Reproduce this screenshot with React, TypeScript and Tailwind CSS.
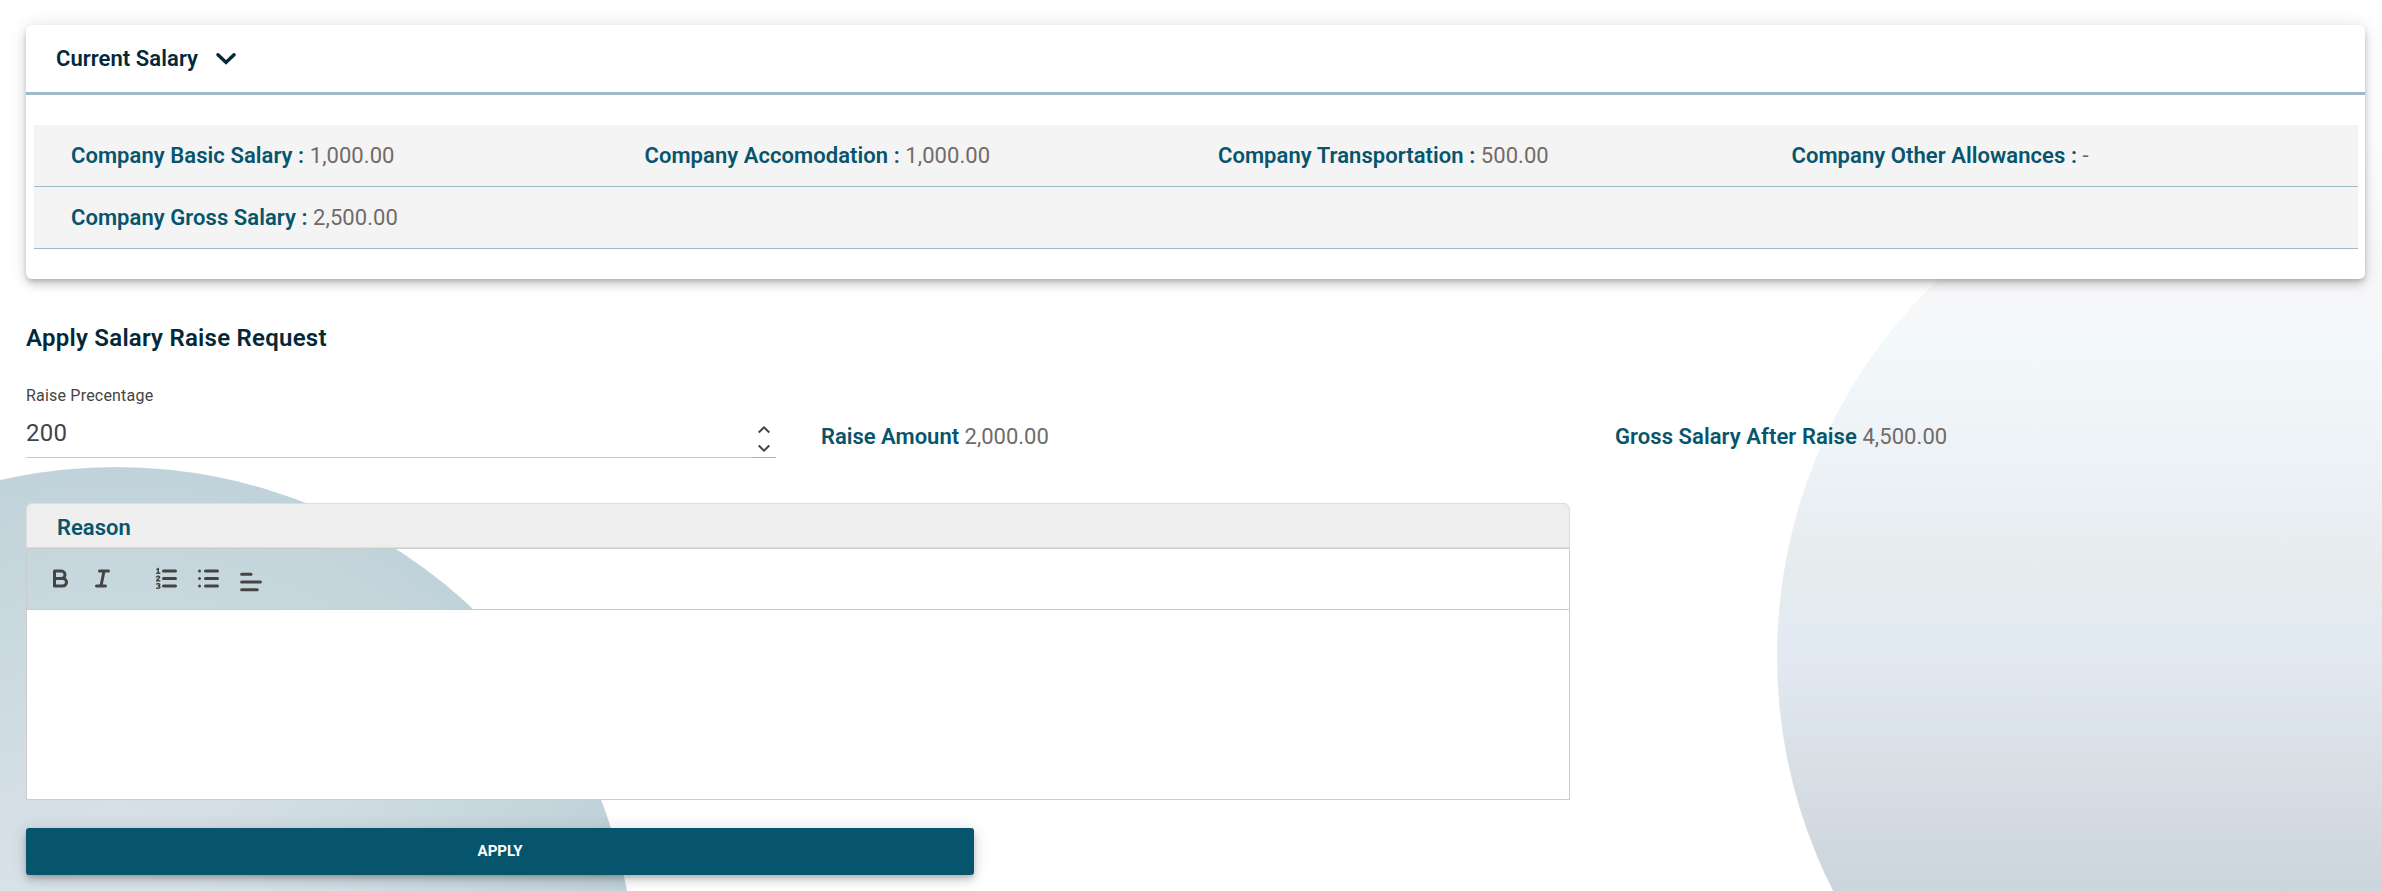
import React from "react";

const salaryItems = [
  { label: "Company Basic Salary", value: "1,000.00" },
  { label: "Company Accomodation", value: "1,000.00" },
  { label: "Company Transportation", value: "500.00" },
  { label: "Company Other Allowances", value: "-" },
];

const Backdrop = () => (
  <div className="absolute inset-0 -z-10 overflow-hidden">
    <div className="absolute left-[1777px] top-[136px] size-[1040px] rounded-full bg-[linear-gradient(180deg,#ffffff_0px,#f7f7f9_165px,#f3f8fb_204px,#ebf1f4_344px,#e5ebed_450px,#e3ebf2_485px,#e1e8f0_530px,#d7dfe5_635px,#d5dce3_665px,#ccd4dc_755px,#ccd4dc_100%)]" />
    <div className="absolute -left-[404px] top-[467px] size-[1040px] rounded-full bg-[radial-gradient(circle,#dde5ec_0%,#dae3e9_15%,#c1d3da_70%)]" />
  </div>
);

const SalaryCard = () => (
  <section className="rounded-md bg-white shadow-[0_3px_5px_-1px_rgba(0,0,0,0.18),0_6px_10px_rgba(0,0,0,0.12),0_1px_18px_rgba(0,0,0,0.12)]">
    <header className="flex h-[70px] items-center gap-[18px] border-b-3 border-[#9fb8ca] pl-[30px] text-[22px] font-semibold tracking-[0.07px] text-[#03283a]">
      Current Salary
      <svg viewBox="0 0 20 12" className="h-3 w-5" fill="none" stroke="currentColor" strokeWidth="3.4">
        <path d="M2 1.8l8 7.7 8-7.7" strokeLinecap="round" />
      </svg>
    </header>
    <div className="pt-[30px] pr-[7px] pb-[30px] pl-2 text-[22px]">
      <div className="grid h-[62px] grid-cols-4 items-center border-b border-[#9fb8ca] bg-[#f4f4f4] px-[15px]">
        {salaryItems.map((item) => (
          <p key={item.label} className="pl-[22px] tracking-[0.06px] text-[#716a6a]">
            <span className="font-semibold text-[#07556c]">{item.label} :</span> {item.value}
          </p>
        ))}
      </div>
      <div className="flex h-[62px] items-center border-b border-[#9fb8ca] bg-[#f4f4f4]">
        <p className="pl-[37px] tracking-[0.06px] text-[#716a6a]">
          <span className="font-semibold text-[#07556c]">Company Gross Salary :</span> 2,500.00
        </p>
      </div>
    </div>
  </section>
);

const Toolbar = () => (
  <div className="flex h-[61px] items-start border-b border-[#ccc] pt-4 pl-5 text-[#444]">
    <svg viewBox="0 0 18 18" className="mr-[15px] size-[27px]" fill="none" stroke="currentColor" strokeWidth="2" strokeLinejoin="round">
      <path d="M5,4H9.5A2.5,2.5,0,0,1,12,6.5v0A2.5,2.5,0,0,1,9.5,9H5V4Z" />
      <path d="M5,9h5.5A2.5,2.5,0,0,1,13,11.5v0A2.5,2.5,0,0,1,10.5,14H5V9Z" />
    </svg>
    <svg viewBox="0 0 18 18" className="mr-[37px] size-[27px]" fill="none" stroke="currentColor" strokeWidth="2" strokeLinecap="round">
      <path d="M7 4h6M5 14h6M8 14l2-10" />
    </svg>
    <svg viewBox="0 0 18 18" className="mr-[15px] size-[27px]" fill="none" stroke="currentColor" strokeWidth="2" strokeLinecap="round">
      <path d="M7 4h8M7 9h8M7 14h8" />
      <path strokeWidth="1" d="M2.5 5.5h2M3.5 5.5v-3l-.9.4M2.4 7.9c.6-.7 2-.5 2 .3 0 .7-1.9 1.3-1.9 2.3h2M2.5 12.6c1.2-.3 2-.1 2 .6s-.6.7-1.2.7c.7 0 1.3.2 1.3.8 0 .8-1 .9-2.1.6" />
    </svg>
    <svg viewBox="0 0 18 18" className="mr-[15px] size-[27px]" fill="none" stroke="currentColor" strokeWidth="2" strokeLinecap="round">
      <path d="M7 4h8M7 9h8M7 14h8M3 4h0M3 9h0M3 14h0" />
    </svg>
    <svg viewBox="0 0 18 18" className="mt-[3px] size-7" fill="none" stroke="currentColor" strokeWidth="2" strokeLinecap="round">
      <path d="M3 4h6M3 9h12M3 14h10" />
    </svg>
  </div>
);

export default function App() {
  return (
    <div className="relative isolate h-[891px] w-[2382px] overflow-hidden bg-white pt-[25px] pr-[17px] pl-[26px] font-[Roboto,sans-serif]">
      <Backdrop />
      <SalaryCard />

      <h2 className="mt-[43px] text-2xl font-semibold tracking-[0.25px] text-[#03283a]">Apply Salary Raise Request</h2>

      <div className="mt-[30px] flex h-[74px]">
        <div className="flex w-[726px] flex-col border-b border-[#ccc] text-[#444]">
          <label className="text-base leading-6 tracking-[0.2px]">Raise Precentage</label>
          <span className="text-2xl leading-[50px] tracking-[0.2px]">200</span>
        </div>
        <div className="flex w-6 items-end justify-center border-b border-[#b3b3b3] pb-[4px] text-[#444]">
          <svg viewBox="0 0 12 28" className="h-7 w-3" fill="none" stroke="currentColor" strokeWidth="2">
            <path d="M.7 7.5L6 2.3l5.3 5.2M.7 20.5L6 25.7l5.3-5.2" />
          </svg>
        </div>
        <p className="mt-[39px] ml-[45px] w-[794px] text-[22px] leading-7 text-[#716a6a]">
          <span className="font-semibold text-[#07556c]">Raise Amount</span> 2,000.00
        </p>
        <p className="mt-[39px] text-[22px] leading-7 tracking-[0.07px] text-[#716a6a]">
          <span className="font-semibold text-[#07556c]">Gross Salary After Raise</span> 4,500.00
        </p>
      </div>

      <div className="mt-[45px] w-[1544px]">
        <div className="flex h-[45px] items-center rounded-t-md border border-[#ddd] bg-[#eee] pt-1 pl-[30px] text-[22px] font-semibold text-[#07556c]">
          Reason
        </div>
        <div className="h-[252px] border border-[#ccc]">
          <Toolbar />
          <div className="h-[189px] bg-white" />
        </div>
      </div>

      <button className="mt-[28px] h-[47px] w-[948px] rounded-[3px] bg-[#07556c] text-[15px] font-bold text-white shadow-[0_3px_5px_-1px_rgba(0,0,0,0.18),0_6px_10px_rgba(0,0,0,0.12),0_1px_18px_rgba(0,0,0,0.12)]">
        APPLY
      </button>
    </div>
  );
}
